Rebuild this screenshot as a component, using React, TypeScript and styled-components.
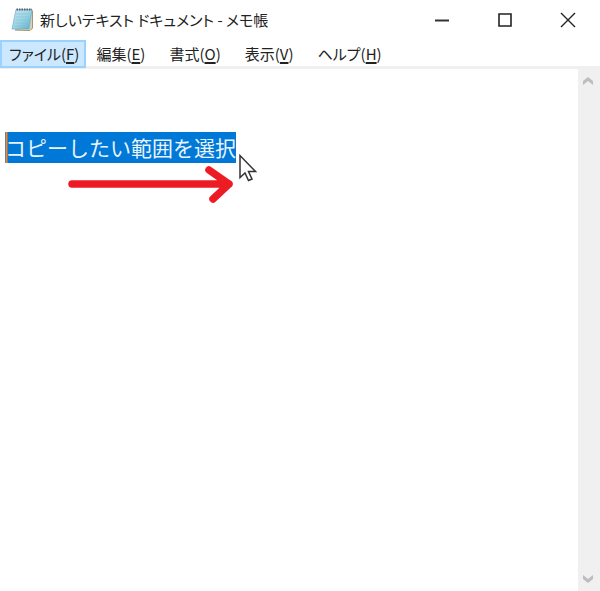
import React, { useEffect, useRef } from "react";
import styled, { createGlobalStyle } from "styled-components";

const GlobalStyle = createGlobalStyle`
  * { box-sizing: border-box; }
  body { margin: 0; background: #fff; }
  button { font: inherit; color: inherit; background: none; border: 0; padding: 0; }
`;

const AppWindow = styled.div`
  display: flex;
  flex-direction: column;
  min-height: 100vh;
  background: #fff;
  color: #222;
  font-family: "Noto Sans CJK JP", "Noto Sans", sans-serif;
  font-size: 15px;
  line-height: 24px;
  font-feature-settings: "palt", "kern";
`;

const TitleBar = styled.header`
  display: flex;
  align-items: center;
  height: 40px;
  padding-left: 10px;
`;

const Title = styled.h1`
  flex: 1;
  margin: 0 0 0 6px;
  font-size: 15px;
  line-height: 24px;
  font-weight: 400;
  white-space: nowrap;
`;

const WindowButton = styled.button`
  display: grid;
  place-items: center;
  width: 63px;
  height: 38px;
  &:last-child { width: 64px; }
`;

const MenuBar = styled.nav`
  display: flex;
  height: 29px;
  border-bottom: 3px solid #f0f0f0;
`;

const MenuButton = styled.button<{ $active?: boolean }>`
  height: 28px;
  padding: ${(p) => (p.$active ? "0 5px 0 7px" : "0 12px 0 8px")};
  border: 2px solid ${(p) => (p.$active ? "#99d1ff" : "transparent")};
  background: ${(p) => (p.$active ? "#cce8ff" : "transparent")};
  white-space: nowrap;
`;

const AccessKey = styled.u`
  text-underline-offset: 2px;
  text-decoration-thickness: 2px;
`;

const Body = styled.main`
  display: flex;
  flex: 1;
`;

const EditorPane = styled.div`
  position: relative;
  display: flex;
  flex: 1;
`;

const Editor = styled.textarea`
  flex: 1;
  min-width: 0;
  padding: 1px 5px;
  border: 0;
  outline: 0;
  resize: none;
  overflow: hidden;
  background: #fff;
  color: #000;
  font-family: "Noto Sans CJK JP", sans-serif;
  font-size: 21px;
  line-height: 31px;
  &::selection { background: #0078d7; color: #e8f3fc; }
`;

const Annotation = styled.svg`
  position: absolute;
  top: 60px;
  left: 0;
  pointer-events: none;
`;

const ScrollBar = styled.div`
  display: flex;
  flex-direction: column;
  justify-content: space-between;
  width: 22px;
  background: #f0f0f0;
`;

const ScrollButton = styled.button`
  display: grid;
  place-items: center;
  width: 20px;
  height: 24px;
`;

const menus = [
  { label: "ファイル", accessKey: "F", active: true },
  { label: "編集", accessKey: "E" },
  { label: "書式", accessKey: "O" },
  { label: "表示", accessKey: "V" },
  { label: "ヘルプ", accessKey: "H" },
];

const leading = "\n\n";
const phrase = "コピーしたい範囲を選択";

function NotepadIcon() {
  return (
    <svg width="24" height="24" viewBox="0 0 24 24" aria-hidden="true">
      <defs>
        <linearGradient id="page" x1="0" y1="0" x2="1" y2="1">
          <stop offset="0" stopColor="#c4e9f1" />
          <stop offset="0.5" stopColor="#9dd5e5" />
          <stop offset="1" stopColor="#56adc8" />
        </linearGradient>
      </defs>
      <path d="M7 2H23V20L20 22.500H5Z" fill="#d8d0b8" />
      <path d="M22.500 3V20L20 22.500L5 22" fill="none" stroke="#a49572" />
      <path d="M6 1.500H22L19 21H2Z" fill="url(#page)" stroke="#74aebf" strokeWidth="0.700" />
      <path d="M6 6H20M6 9H19.500M5.500 12H19M5 15H18.500M4.500 18H18" stroke="#7fc0d3" strokeWidth="0.600" />
      <path d="M6.500 1.500H22" stroke="#555f66" strokeWidth="2" strokeDasharray="1.500 1" />
    </svg>
  );
}

function Chevron({ down }: { down?: boolean }) {
  return (
    <svg width="12" height="10" viewBox="0 0 12 10" aria-hidden="true">
      <path d={down ? "M1 1L6 5L11 1V5L6 9L1 5Z" : "M1 9L6 5L11 9V5L6 1L1 5Z"} fill="#bdbdbd" />
    </svg>
  );
}

export default function App() {
  const editor = useRef<HTMLTextAreaElement>(null);

  useEffect(() => {
    editor.current?.focus();
    editor.current?.setSelectionRange(leading.length, leading.length + phrase.length);
  }, []);

  return (
    <AppWindow>
      <GlobalStyle />
      <TitleBar>
        <NotepadIcon />
        <Title>新しいテキスト ドキュメント - メモ帳</Title>
        <WindowButton aria-label="最小化">
          <svg width="16" height="16"><path d="M1 8.500H15" stroke="#333" strokeWidth="2" /></svg>
        </WindowButton>
        <WindowButton aria-label="最大化">
          <svg width="16" height="16"><path d="M2 2H14V14H2Z" fill="none" stroke="#222" strokeWidth="1.600" /></svg>
        </WindowButton>
        <WindowButton aria-label="閉じる">
          <svg width="16" height="16"><path d="M1 1L15 15M15 1L1 15" stroke="#222" strokeWidth="1.400" /></svg>
        </WindowButton>
      </TitleBar>
      <MenuBar aria-label="メニュー">
        {menus.map((m) => (
          <MenuButton key={m.accessKey} $active={m.active}>
            {m.label}(<AccessKey>{m.accessKey}</AccessKey>)
          </MenuButton>
        ))}
      </MenuBar>
      <Body>
        <EditorPane>
          <Editor ref={editor} aria-label="テキスト" spellCheck={false} defaultValue={leading + phrase} />
          <Annotation width="270" height="90" viewBox="0 129 270 90" aria-hidden="true">
            <path d="M6.500 132V163" stroke="#f0872e" strokeWidth="2" />
            <path d="M72 184H229M209 170L229 184L213 199" fill="none" stroke="#ed1c24" strokeWidth="7.500" strokeLinecap="round" strokeLinejoin="round" />
            <path d="M240 155.500V177.500L245 173L248.500 180.500L252 179L248.500 171.500H255.500Z" fill="#fff" stroke="#333" strokeWidth="1.500" />
          </Annotation>
        </EditorPane>
        <ScrollBar>
          <ScrollButton aria-label="上へスクロール"><Chevron /></ScrollButton>
          <ScrollButton aria-label="下へスクロール"><Chevron down /></ScrollButton>
        </ScrollBar>
      </Body>
    </AppWindow>
  );
}
